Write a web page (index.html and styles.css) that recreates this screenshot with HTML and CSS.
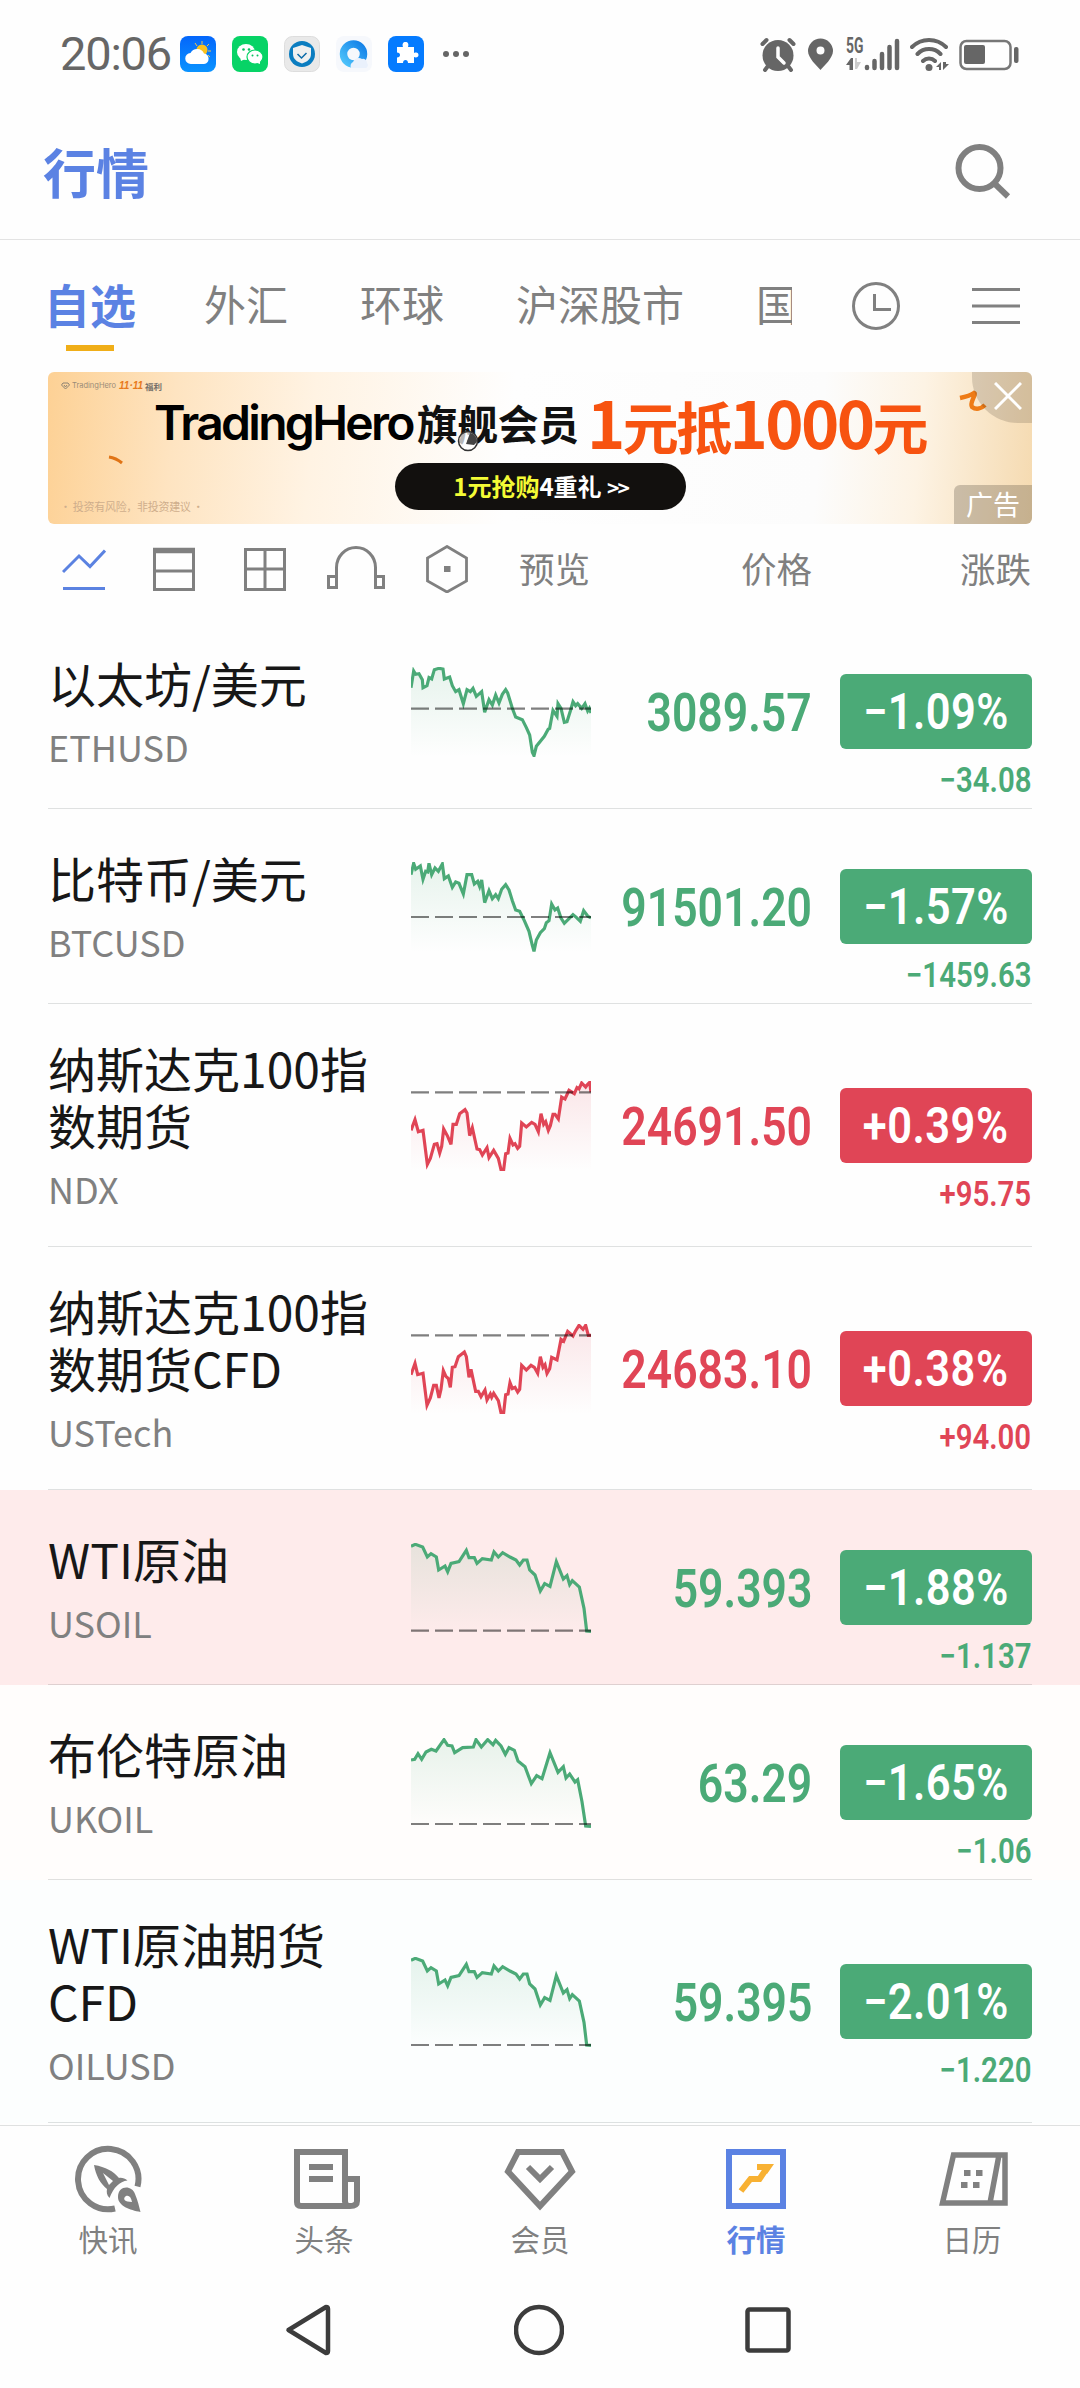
FILE: index.html
```html
<!DOCTYPE html>
<html lang="zh-CN">

<head>
  <meta charset="UTF-8">
  <title>行情</title>
  <link rel="stylesheet" href="styles.css">
</head>

<body>
  <div class="status-bar">
    <span class="time">20:06</span>
    <div class="app-icons">
      <svg width="36" height="36" viewBox="0 0 36 36">
        <defs>
          <linearGradient id="sky" x1="0" y1="0" x2="0" y2="1"><stop offset="0" stop-color="#0466fb"/><stop offset="1" stop-color="#0a93ff"/></linearGradient>
        </defs>
        <rect width="36" height="36" rx="8" fill="url(#sky)"/>
        <path d="M22 5v3M15 7l2 3M29 8l-2 2M31 15h-3M28 19l2 2" stroke="#f3c44a" stroke-width="1"/>
        <circle cx="22" cy="14" r="5.5" fill="#fcc21c"/>
        <path d="M11 28a5.500 5.500 0 0 1-.5-11A7.500 7.500 0 0 1 24 17.500a5.300 5.300 0 0 1 0 10.500z" fill="#fff"/>
      </svg>
      <svg width="36" height="36" viewBox="0 0 36 36">
        <rect width="36" height="36" rx="8" fill="#07d366"/>
        <ellipse cx="14" cy="16" rx="9" ry="8" fill="#fff"/>
        <path d="M8 21l1 4 4-2z" fill="#fff"/>
        <ellipse cx="23" cy="21" rx="8" ry="7" fill="#fff" stroke="#07d366" stroke-width="1.200"/>
        <path d="M28 25v3l-4-1.500z" fill="#fff"/>
        <g fill="#07c160"><circle cx="11.500" cy="13.500" r="1.300"/><circle cx="17" cy="13.500" r="1.300"/><circle cx="20.500" cy="19.500" r="1"/><circle cx="25.500" cy="19.500" r="1"/></g>
      </svg>
      <svg width="36" height="36" viewBox="0 0 36 36">
        <rect x=".5" y=".5" width="35" height="35" rx="8" fill="#e9e9e9" stroke="#ddd"/>
        <circle cx="18" cy="18" r="13" fill="#0b7dc0"/>
        <path d="M18 9l9 3v6c0 5-4 8-9 9.500C13 26 9 23 9 18v-6z" fill="#f0f0f0"/>
        <path d="M13.500 18l4 4 5-5" fill="none" stroke="#0b6aa8" stroke-width="1.500"/>
      </svg>
      <svg width="36" height="36" viewBox="0 0 36 36">
        <defs>
          <linearGradient id="ring" x1="0" y1="1" x2="1" y2="0"><stop offset="0" stop-color="#4fc4fa"/><stop offset="1" stop-color="#1380e8"/></linearGradient>
        </defs>
        <rect width="36" height="36" rx="8" fill="#f6f8fc"/>
        <circle cx="17.500" cy="18" r="10" fill="none" stroke="url(#ring)" stroke-width="7.500"/>
        <path d="M15 32a4.500 4.500 0 0 1 2-6 6 6 0 0 1 9-3 4 4 0 0 1 5 4 3 3 0 0 1-1 5z" fill="#eaf1fc"/>
      </svg>
      <svg width="36" height="36" viewBox="0 0 36 36">
        <rect width="36" height="36" rx="8" fill="#057bff"/>
        <path d="M9 11h6c-1-3 0-5 2.500-5S21 8 20 11h6v6c3-1 4.500 0 4.500 2s-2 3-4.500 2v6h-6c0-2-1-3-2.500-3S15 25 15 27H9v-5.500c2 0 3-1 3-2.500s-1-2.500-3-2.500z" fill="#fff"/>
      </svg>
      <svg class="dots" width="26" height="36" viewBox="0 0 26 36" fill="#666"><circle cx="3" cy="18" r="3"/><circle cx="13" cy="18" r="3"/><circle cx="23" cy="18" r="3"/></svg>
    </div>
    <div class="system-icons">
      <svg width="36" height="36" viewBox="0 0 36 36">
        <g stroke="#666" stroke-linecap="round" fill="none">
          <path d="M2.500 8l4-4M29.500 4l4 4" stroke-width="4"/>
          <path d="M8 30l-3 4M28 30l3 4" stroke-width="4"/>
        </g>
        <circle cx="18" cy="19.500" r="15.500" fill="#666"/>
        <path d="M18 12v9l6 6" fill="none" stroke="#fff" stroke-width="3.500" stroke-linecap="round"/>
      </svg>
      <svg class="pin" width="25" height="36" viewBox="0 0 25 36">
        <path d="M12.500 34C9 30 0 22 0 15a12.500 12.500 0 0 1 25 0c0 7-9 15-12.500 19zM12.500 10.500a4 4 0 1 0 0 8 4 4 0 0 0 0-8z" fill="#666"/>
      </svg>
      <div class="signal">
        <div class="network">
          <span class="network-type">5G</span>
          <svg width="15" height="12" viewBox="0 0 15 12"><path d="M0 7l5-7h2v12H3.500V7z" fill="#666"/><path d="M9 0h2v4h4l-4 7H9z" fill="#ccc"/></svg>
        </div>
        <svg width="36" height="36" viewBox="0 0 36 36" stroke="#666" stroke-width="4.500" stroke-linecap="round"><path d="M3 31v1M10.500 25v7M18 18v14M25.500 11v21M33 5v27"/></svg>
      </div>
      <svg class="wifi" width="40" height="36" viewBox="0 0 40 36">
        <g fill="none" stroke="#666" stroke-width="4" stroke-linecap="round"><path d="M2 11a24 24 0 0 1 34 0M7.500 18a16 16 0 0 1 23 0M13 25a8.500 8.500 0 0 1 12 0"/></g>
        <circle cx="19" cy="31.500" r="3.500" fill="#666"/>
        <path d="M26 31l5-5v8h-2v-3zM33 26v8l6-6h-3v-2z" fill="#666"/>
      </svg>
      <svg width="60" height="36" viewBox="0 0 60 36">
        <rect x="1.500" y="5" width="50" height="28" rx="6" fill="none" stroke="#777" stroke-width="2.500"/>
        <rect x="5" y="9" width="21" height="19" rx="2" fill="#666"/>
        <rect x="55" y="11" width="4.500" height="16" rx="2" fill="#666"/>
      </svg>
    </div>
  </div>

  <div class="page-header">
    <h1 class="page-title">行情</h1>
    <svg width="56" height="60" viewBox="0 0 56 60" fill="none" stroke="#808080" stroke-width="6"><circle cx="24.500" cy="26" r="21"/><path d="M39 41l14 13.500"/></svg>
  </div>

  <div class="tabs">
    <div class="tab-list">
      <div class="tab active">自选</div>
      <div class="tab">外汇</div>
      <div class="tab">环球</div>
      <div class="tab">沪深股市</div>
      <div class="tab">国</div>
    </div>
    <div class="tab-tools">
      <svg width="48" height="48" viewBox="0 0 48 48" fill="none" stroke="#808080" stroke-width="3"><circle cx="24" cy="24" r="22.500"/><path d="M22.500 12v15.500h16.500"/></svg>
      <svg width="48" height="48" viewBox="0 0 48 48" stroke="#808080" stroke-width="3"><path d="M0 7.500h48M0 24h48M0 40.500h48"/></svg>
    </div>
  </div>

  <div class="banner">
    <div class="banner-brand">
      <svg width="9" height="8" viewBox="0 0 9 8" fill="none" stroke="#8d8272"><path d="M2 1h5l1.500 2-4 4-4-4zM3 3l1.500 2L6 3"/></svg>
      <span>TradingHero</span><b>11·11</b><strong>福利</strong>
    </div>
    <div class="banner-headline">
      <span class="hero">TradingHero</span><span class="member">旗舰会员</span><span class="offer"><i>1</i>元抵<i>1000</i>元</span>
    </div>
    <div class="banner-button"><span>1元抢购</span>4重礼 <small>&gt;&gt;</small></div>
    <div class="banner-risk">· 投资有风险，非投资建议 ·</div>
    <svg class="banner-art" width="984" height="152" viewBox="0 0 984 152" fill="none">
      <path d="M61 85q7 1 13 6" stroke="#e07416" stroke-width="3"/>
      <path d="M912 26c5-1 10-2 14-5 3 1-5 10-2 14 4 3 9 2 13-2" stroke="#ee7b16" stroke-width="4.500"/>
      <circle cx="420" cy="69" r="9.500" fill="#fff" fill-opacity="0.7" stroke="#333" stroke-width="1.500"/>
      <path d="M422 61a8 8 0 0 1 7 8 8 8 0 0 1-3 4l-8-1z" fill="#444"/>
    </svg>
    <div class="banner-close">
      <svg width="28" height="28" viewBox="0 0 28 28" stroke="#fff" stroke-width="3"><path d="M1 1l26 26M27 1L1 27"/></svg>
    </div>
    <div class="banner-tag">广告</div>
  </div>

  <div class="toolbar">
    <div class="view-icons">
      <svg width="44" height="48" viewBox="0 0 44 48" fill="none" stroke="#5b82e1" stroke-width="3"><path d="M1 27l16-16 11 10.500L43 5.500M1 43.500h42"/></svg>
      <svg width="42" height="48" viewBox="0 0 42 48" fill="none" stroke="#808080" stroke-width="3"><path d="M1.500 3v41.500h39V3M0 26h42"/><path d="M0 5.500h42" stroke-width="5.500"/></svg>
      <svg width="42" height="48" viewBox="0 0 42 48" fill="none" stroke="#808080" stroke-width="3"><path d="M1.500 4.500h39v40h-39zM21 4v40M1 24h40"/></svg>
      <svg width="58" height="48" viewBox="0 0 58 48" fill="none" stroke="#808080" stroke-width="3"><path d="M9.500 44V22.500a19.500 20 0 0 1 39 0V44M9.500 31.500h-8v11h8M48.500 31.500h8v11h-8"/></svg>
      <svg width="42" height="48" viewBox="0 0 42 48" fill="none" stroke="#808080" stroke-width="2.800"><path d="M21 1.500l19.500 11.500v23L21 47 1.500 36V13z"/><path d="M18 21h6.500v6H18z" fill="#808080" stroke="none"/></svg>
    </div>
    <div class="col-preview">预览</div>
    <div class="col-price">价格</div>
    <div class="col-change">涨跌</div>
  </div>

  <div class="quote-list">
    <div class="quote down">
      <div class="name">以太坊/美元<div class="code">ETHUSD</div></div>
      <svg class="spark" data-base="125" data-points="0,62 8,12 14,22 24,20 34,38 36,62 48,56 54,32 62,36 70,8 84,4 96,6 100,36 116,30 124,56 134,74 144,68 157,110 168,68 178,74 186,64 196,88 212,74 221,136 234,98 244,114 254,84 264,108 274,82 284,68 290,78 304,124 314,150 334,158 346,182 356,204 364,256 369,266 376,238 400,208 412,186 416,184 426,130 438,148 441,110 450,124 460,166 468,164 478,132 486,104 494,116 500,110 512,124 522,110 530,132 535,124 540,138"></svg>
      <div class="price"><span>3089.57</span></div>
      <div class="change"><div class="percent"><span>−1.09%</span></div><div class="amount"><span>−34.08</span></div></div>
    </div>
    <div class="quote down">
      <div class="name">比特币/美元<div class="code">BTCUSD</div></div>
      <svg class="spark" data-base="165" data-points="0,38 8,4 14,22 28,12 36,52 44,28 50,30 54,4 62,38 72,18 82,28 94,6 100,50 112,42 124,76 134,60 144,64 157,96 168,38 182,38 190,66 200,58 206,74 212,54 221,122 234,86 244,110 254,98 262,110 272,82 284,68 294,84 304,116 314,144 326,148 340,176 354,208 364,250 369,268 376,234 388,212 400,200 406,182 414,176 422,126 432,144 440,138 450,168 460,184 474,170 486,158 496,166 508,178 518,146 530,162 540,168"></svg>
      <div class="price"><span>91501.20</span></div>
      <div class="change"><div class="percent"><span>−1.57%</span></div><div class="amount"><span>−1459.63</span></div></div>
    </div>
    <div class="quote tall up">
      <div class="name">纳斯达克100指<br>数期货<div class="code">NDX</div></div>
      <svg class="spark" data-base="34" data-points="0,148 12,116 22,152 36,148 49,250 58,232 70,190 78,188 86,216 92,196 98,144 110,166 120,190 126,130 136,130 146,98 162,86 168,96 176,164 184,140 198,204 206,206 214,222 228,200 234,230 248,208 262,232 270,266 278,266 284,218 291,216 297,172 306,192 312,188 320,202 326,196 332,126 346,138 362,124 372,130 382,152 390,98 398,130 404,122 412,148 418,134 426,100 432,100 442,114 452,48 462,54 474,28 490,38 498,20 504,24 512,6 524,18 530,10 536,4 540,34"></svg>
      <div class="price"><span>24691.50</span></div>
      <div class="change"><div class="percent"><span>+0.39%</span></div><div class="amount"><span>+95.75</span></div></div>
    </div>
    <div class="quote tall up">
      <div class="name">纳斯达克100指<br>数期货CFD<div class="code">USTech</div></div>
      <svg class="spark" data-base="34" data-points="0,152 12,118 20,152 36,148 48,244 58,222 68,184 76,184 84,222 90,196 97,140 104,156 112,164 118,190 124,130 132,128 142,98 160,84 166,98 174,160 180,136 194,202 202,202 210,218 222,198 228,228 238,210 242,220 248,208 262,230 270,266 278,266 284,212 291,210 297,176 304,194 312,190 320,204 326,196 332,124 346,138 360,124 370,130 380,148 388,98 396,130 402,122 408,148 416,134 422,100 438,108 450,46 458,52 470,22 486,36 494,20 504,4 516,16 524,4 532,34 540,34"></svg>
      <div class="price"><span>24683.10</span></div>
      <div class="change"><div class="percent"><span>+0.38%</span></div><div class="amount"><span>+94.00</span></div></div>
    </div>
    <div class="quote down highlight">
      <div class="name">WTI原油<div class="code">USOIL</div></div>
      <svg class="spark" data-base="263" data-points="0,10 13,4 35,12 49,42 60,32 76,42 83,81 102,69 110,86 120,61 144,56 166,22 174,44 190,44 198,61 214,47 241,51 249,27 262,42 275,29 297,42 315,51 326,66 337,51 348,51 356,81 372,96 388,144 401,122 417,130 436,56 457,108 468,98 476,125 484,113 505,132 519,196 527,264 540,265"></svg>
      <div class="price"><span>59.393</span></div>
      <div class="change"><div class="percent"><span>−1.88%</span></div><div class="amount"><span>−1.137</span></div></div>
    </div>
    <div class="quote down warm">
      <div class="name">布伦特原油<div class="code">UKOIL</div></div>
      <svg class="spark" data-base="258" data-points="0,66 11,64 21,47 32,64 45,42 61,34 75,39 99,5 110,22 123,24 131,44 155,29 187,27 195,5 211,27 230,5 246,20 254,7 270,24 283,49 294,29 310,37 321,69 342,86 361,137 377,113 393,122 417,44 441,103 457,86 465,120 476,108 492,132 500,125 513,191 524,264 540,265"></svg>
      <div class="price"><span>63.29</span></div>
      <div class="change"><div class="percent"><span>−1.65%</span></div><div class="amount"><span>−1.06</span></div></div>
    </div>
    <div class="quote tall down cool">
      <div class="name">WTI原油期货<br>CFD<div class="code">OILUSD</div></div>
      <svg class="spark" data-base="264" data-points="0,10 13,4 35,12 49,42 60,32 76,42 83,81 102,69 110,86 120,61 144,56 166,22 174,44 190,44 198,61 214,47 241,51 249,27 262,42 275,29 297,42 315,51 326,66 337,51 348,51 356,81 372,96 388,144 401,122 417,130 436,56 457,108 468,98 476,125 484,113 505,132 519,196 527,264 540,265"></svg>
      <div class="price"><span>59.395</span></div>
      <div class="change"><div class="percent"><span>−2.01%</span></div><div class="amount"><span>−1.220</span></div></div>
    </div>
  </div>

  <div class="bottom-nav">
    <div class="nav-item">
      <svg width="72" height="72" viewBox="0 0 72 72">
        <path d="M65.500 43.500A30.200 30.200 0 1 0 43 65.500" fill="none" stroke="#808080" stroke-width="6"/>
        <path fill-rule="evenodd" d="M22 22c12 2 19 6 25 13 3-.5 6 .5 8.500 2.500-8 1-14 7-18 17.500-3-3-3-6-2.500-9C28 40 24 33 22 22zM31 30l6 12 4-4z" fill="#808080"/>
        <path fill-rule="evenodd" d="M68.500 69C58 67 46 63 46 54c0-12 14-12 17-3 3 7 4 12 5.500 18zM60 59c-1-5-3-7-6-6-4 3-1 6 6 6z" fill="#808080"/>
      </svg>
      <span>快讯</span>
    </div>
    <div class="nav-item">
      <svg width="72" height="72" viewBox="0 0 72 72" fill="none" stroke="#808080" stroke-width="6">
        <path d="M57 59V9H9v50q0 4 4 4h49q7 0 7-5V36H57v22q0 5 4 5M21 24h24M21 36h24"/>
      </svg>
      <span>头条</span>
    </div>
    <div class="nav-item">
      <svg width="72" height="72" viewBox="0 0 72 72" fill="none" stroke="#808080" stroke-width="6">
        <path d="M14 9h44l10 19.500L36 63 4 28.500zM24 24l12 12 12-12"/>
      </svg>
      <span>会员</span>
    </div>
    <div class="nav-item active">
      <svg width="72" height="72" viewBox="0 0 72 72">
        <path d="M9 9h54v54H9z" fill="none" stroke="#5b82e3" stroke-width="6"/>
        <path d="M21 48l9.500-12h9l8-12" fill="none" stroke="#f8b133" stroke-width="6"/>
        <path d="M37 21h17l-7 10-5-4h-5z" fill="#f8b133"/>
      </svg>
      <span>行情</span>
    </div>
    <div class="nav-item">
      <svg width="72" height="72" viewBox="0 0 72 72" fill="none" stroke="#808080" stroke-width="5.500">
        <path d="M17.500 12H69v48H6.500zM63 12l-9 48"/>
        <path d="M28 27h6.500v6H28zM40 27h6.500v6H40zM25 39h6.500v6H25zM37 39h6.500v6H37z" fill="#808080" stroke="none"/>
      </svg>
      <span>日历</span>
    </div>
  </div>

  <div class="system-nav">
    <svg width="50" height="56" viewBox="0 0 50 56" fill="none" stroke="#3c3c3c" stroke-width="4.500" stroke-linejoin="round"><path d="M4.500 28L42 5q2 0 2 2v42q0 2-2 2z"/></svg>
    <svg width="50" height="56" viewBox="0 0 50 56" fill="none" stroke="#3c3c3c" stroke-width="4.500"><circle cx="25" cy="28" r="23"/></svg>
    <svg width="50" height="56" viewBox="0 0 50 56" fill="none" stroke="#3c3c3c" stroke-width="4.500"><rect x="4.500" y="7.500" width="41" height="41" rx="2"/></svg>
  </div>

  <script src="script.js"></script>
</body>

</html>
```
FILE: styles.css
```css
* {
  box-sizing: border-box;
}

body {
  width: 1080px;
  height: 2388px;
  margin: 0;
  overflow: hidden;
  display: flex;
  flex-direction: column;
  background-color: #fefefe;
  color: #808080;
  font-family: "Noto Sans CJK SC", sans-serif;
}

svg {
  display: block;
  flex: none;
}

/* status bar */
.status-bar {
  height: 108px;
  padding: 0 61px 0 60px;
  display: flex;
  align-items: center;
  color: #666;
}

.time {
  width: 120px;
  font: 400 47px/60px Roboto, sans-serif;
  letter-spacing: -1.2px;
  white-space: nowrap;
}

.app-icons {
  display: flex;
  gap: 16px;
}

.dots {
  margin-left: 3px;
}

.system-icons {
  margin-left: auto;
  display: flex;
  align-items: center;
}

.pin {
  margin-left: 12px;
}

.signal {
  margin-left: 13px;
  display: flex;
}

.network {
  width: 18px;
  height: 36px;
  display: flex;
  flex-direction: column;
  justify-content: space-between;
  padding: 0 0 2px;
}

.network-type {
  font: 700 22px/20px Roboto, sans-serif;
  transform: scaleX(0.63);
  transform-origin: left;
}

.wifi {
  margin: 0 9px 0 10px;
}

/* title */
.page-header {
  height: 132px;
  padding: 0 69px 4px 43px;
  display: flex;
  align-items: center;
  justify-content: space-between;
  border-bottom: 1px solid #e3e3e3;
}

.page-title {
  margin: 0;
  padding-bottom: 2px;
  font-size: 53px;
  line-height: 64px;
  font-weight: 700;
  color: #5b82e3;
}

/* category tabs */
.tabs {
  height: 132px;
  padding: 0 60px 0 44px;
  display: flex;
  align-items: center;
  justify-content: space-between;
}

.tab-list {
  width: 748px;
  padding-bottom: 6px;
  overflow: hidden;
  display: flex;
  gap: 72px;
  font-size: 42px;
  line-height: 90px;
  white-space: nowrap;
}

.tab {
  flex: none;
}

.tab.active {
  position: relative;
  width: 88px;
  font-size: 46px;
  font-weight: 700;
  color: #5b82e3;
}

.tab.active::after {
  content: "";
  position: absolute;
  left: 22px;
  bottom: -3px;
  width: 48px;
  height: 6px;
  background-color: #f0ae18;
}

.tab-tools {
  display: flex;
  gap: 72px;
}

/* ad banner */
.banner {
  position: relative;
  height: 152px;
  flex: none;
  margin: 0 48px;
  border-radius: 6px;
  overflow: hidden;
  background: linear-gradient(95deg, #fdd195 0%, #fee4c1 13%, #fff3e3 27%, #fefefe 47%, #fcfcfc 78%, #fdf3e4 88%, #f5dab0 100%);
}

.banner-brand {
  height: 22px;
  padding: 6px 0 0 13px;
  display: flex;
  align-items: center;
  line-height: 14px;
  white-space: nowrap;
}

.banner-brand span {
  margin: 0 5px 0 2px;
  width: 42px;
  color: #9a8c78;
  font-family: Inter, sans-serif;
  font-size: 7.5px;
}

.banner-brand b {
  width: 26px;
  font-family: "Liberation Sans", sans-serif;
  font-style: italic;
  font-size: 10px;
  color: #e87a1d;
}

.banner-brand strong {
  font-size: 8.5px;
  color: #77716a;
}

.banner-headline {
  height: 58px;
  padding-left: 106px;
  display: flex;
  align-items: center;
  white-space: nowrap;
  line-height: 58px;
}

.hero {
  width: 263px;
  font-family: Inter, sans-serif;
  font-size: 48px;
  font-weight: 600;
  letter-spacing: -2.7px;
  color: #000;
}

.member {
  width: 170px;
  font-size: 40.5px;
  font-weight: 700;
  color: #111;
}

.offer {
  font-size: 56px;
  font-weight: 700;
  letter-spacing: -2.6px;
  color: #f75310;
}

.offer i {
  font-style: normal;
  font-size: 65px;
}

.banner-button {
  width: 291px;
  height: 47px;
  margin: 11px 0 0 347px;
  border-radius: 24px;
  background-color: #12100e;
  color: #fff;
  font-size: 24px;
  font-weight: 700;
  line-height: 46px;
  text-align: center;
}

.banner-button span {
  color: #f4fb35;
}

.banner-button small {
  font-size: 21px;
  letter-spacing: -2px;
}

.banner-risk {
  position: absolute;
  left: 12px;
  bottom: 10px;
  font-size: 11px;
  line-height: 16px;
  letter-spacing: -0.3px;
  color: #cfae8c;
}

.banner-art {
  position: absolute;
  left: 0;
  top: 0;
}

.banner-close {
  position: absolute;
  right: 0;
  top: 0;
  width: 60px;
  height: 51px;
  padding: 10px 0 0 22px;
  border-bottom-left-radius: 46px;
  background-color: rgba(60, 50, 40, 0.18);
}

.banner-tag {
  position: absolute;
  right: 0;
  bottom: 0;
  width: 78px;
  height: 39px;
  border-top-left-radius: 6px;
  background-color: rgba(60, 50, 40, 0.25);
  color: #fff;
  font-size: 27px;
  line-height: 37px;
  text-align: center;
}

/* view switch and column titles */
.toolbar {
  height: 90px;
  flex: none;
  padding: 0 49px 0 62px;
  display: flex;
  align-items: center;
  font-size: 35.5px;
  line-height: 50px;
}

.view-icons {
  width: 457px;
  display: flex;
}

.view-icons svg:nth-child(2) {
  margin-left: 47px;
}

.view-icons svg:nth-child(3) {
  margin-left: 49px;
}

.view-icons svg:nth-child(4),
.view-icons svg:nth-child(5) {
  margin-left: 41px;
}

.col-preview,
.col-price,
.col-change {
  padding-bottom: 3px;
}

.col-price {
  margin-left: auto;
}

.col-change {
  width: 219px;
  text-align: right;
}

/* quotes */
.quote-list {
  flex: 1;
  overflow: hidden;
}

.quote {
  position: relative;
  height: 195px;
  padding: 0 48px;
  display: grid;
  grid-template-columns: 363px 180px 249px 192px;
  align-items: center;
}

.quote.tall {
  height: 243px;
}

.quote::after {
  content: "";
  position: absolute;
  left: 48px;
  right: 48px;
  bottom: 0;
  height: 1px;
  background-color: rgba(0, 20, 20, 0.12);
}

.down {
  --color: #4baa77;
}

.up {
  --color: #e04556;
}

.highlight {
  background-color: #feebeb;
}

.warm {
  background-color: #fffdfc;
}

.cool {
  background-color: #fcfefe;
}

.name {
  padding-top: 2px;
  font-size: 48px;
  line-height: 57px;
  white-space: nowrap;
  color: #171717;
}

.code {
  margin-top: 10px;
  font-size: 36px;
  line-height: 51px;
  color: #808080;
}

.spark {
  width: 180px;
  height: 90px;
  color: var(--color);
}

.price {
  display: flex;
  justify-content: flex-end;
  padding: 2px 28px 0 0;
  font: 600 53px/60px Roboto, sans-serif;
  color: var(--color);
}

/* narrow digits */
.price span,
.amount span,
.percent span {
  display: inline-block;
  transform: scaleX(0.84);
  transform-origin: right;
}

.change {
  padding-top: 60px;
}

.percent {
  height: 75px;
  border-radius: 6px;
  background-color: var(--color);
  color: #fff;
  text-align: center;
  font: 600 50px/77px Roboto, sans-serif;
  letter-spacing: 0.5px;
}

.percent span {
  transform: scaleX(0.87);
  transform-origin: center;
}

.amount {
  height: 60px;
  padding-right: 1px;
  text-align: right;
  font: 600 35px/63px Roboto, sans-serif;
  color: var(--color);
}

/* bottom navigation */
.bottom-nav {
  height: 147px;
  flex: none;
  display: flex;
  border-top: 1px solid #dfe1e1;
}

.nav-item {
  width: 216px;
  padding-top: 17px;
  display: flex;
  flex-direction: column;
  align-items: center;
  font-size: 29.5px;
  line-height: 47px;
}

.nav-item.active {
  color: #5b82e3;
  font-weight: 700;
}

.system-nav {
  height: 116px;
  flex: none;
  padding: 0 287px 0 284px;
  display: flex;
  align-items: center;
  justify-content: space-between;
}
```
FILE: script.js
```js
// draws each sparkline: shaded area, dashed base line, price line
document.querySelectorAll(".spark").forEach(function (svg, i) {
  var points = svg.dataset.points;
  var base = svg.dataset.base;
  svg.setAttribute("viewBox", "0 0 540 270");
  svg.innerHTML =
    '<defs><linearGradient id="fade' + i + '" x1="0" y1="0" x2="0" y2="1">' +
    '<stop offset="0" stop-color="currentColor" stop-opacity="0.13"/>' +
    '<stop offset="1" stop-color="currentColor" stop-opacity="0"/></linearGradient></defs>' +
    '<polygon points="0,270 ' + points + ' 540,270" fill="url(#fade' + i + ')"/>' +
    '<polyline points="' + points + '" fill="none" stroke="currentColor" stroke-width="9.5"/>' +
    '<line x1="0" x2="540" y1="' + base + '" y2="' + base + '" stroke="#000" stroke-opacity="0.5" stroke-width="6.5" stroke-dasharray="54 18"/>';
});
```
